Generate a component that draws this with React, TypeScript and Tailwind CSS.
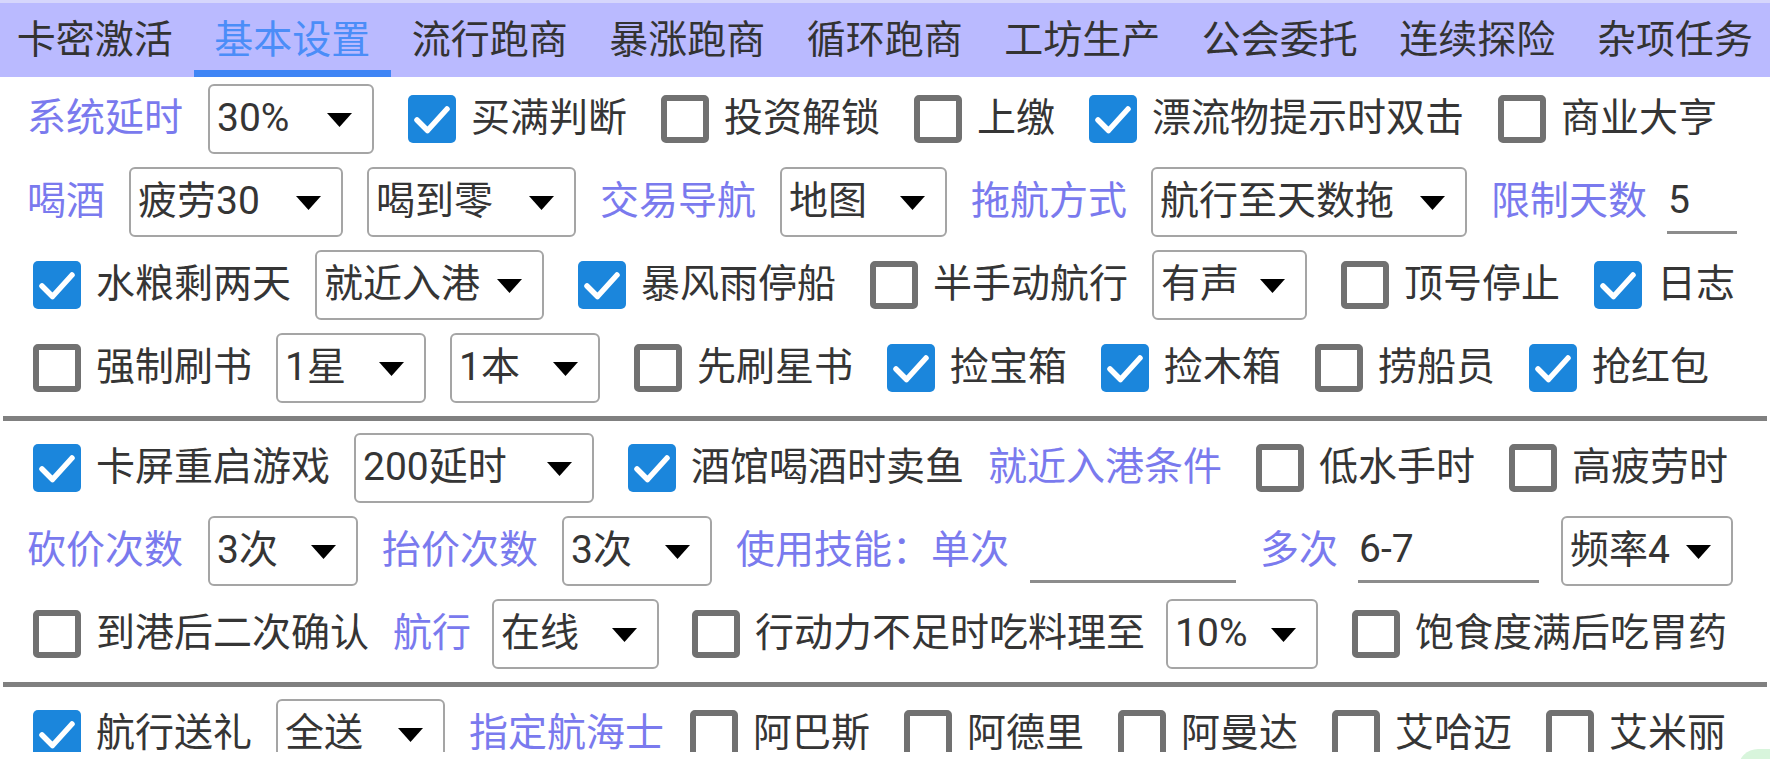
import React from 'react';

const TABS = ['卡密激活', '基本设置', '流行跑商', '暴涨跑商', '循环跑商', '工坊生产', '公会委托', '连续探险', '杂项任务'];

const Box = ({ on }: { on: boolean }) =>
    on ? (
        <span className="flex h-[48px] w-[48px] shrink-0 items-center justify-center rounded-[5px] bg-[#1b86dc]">
            <svg viewBox="0 0 48 48" className="h-[48px] w-[48px]">
                <polyline points="9,25 19.5,35.5 39,14" fill="none" stroke="#fff" strokeWidth="5.5" strokeLinecap="round" strokeLinejoin="round" />
            </svg>
        </span>
    ) : (
        <span className="h-[48px] w-[48px] shrink-0 rounded-[5px] border-[6px] border-[#717171]" />
    );

const Check = ({ on = false, text, ml = 'ml-[10px]' }: { on?: boolean; text: string; ml?: string }) => (
    <div className={`flex shrink-0 items-center gap-[15px] ${ml}`}>
        <Box on={on} />
        <span className="whitespace-nowrap">{text}</span>
    </div>
);

const Select = ({ value, className = '' }: { value: string; className?: string }) => (
    <div className={`flex h-[70px] shrink-0 items-center justify-between rounded-[6px] border-2 border-[#a5a5a5] pl-[7px] pr-[20px] ${className}`}>
        <span className="whitespace-nowrap">{value}</span>
        <svg viewBox="0 0 25 14" className="mt-[2px] h-[14px] w-[25px] shrink-0">
            <polygon points="0,0 25,0 12.5,14" fill="#000" />
        </svg>
    </div>
);

const Label = ({ text }: { text: string }) => (
    <span className="shrink-0 whitespace-nowrap text-[#7a7aee]">{text}</span>
);

const Input = ({ value = '', className = '' }: { value?: string; className?: string }) => (
    <div className={`flex h-[64px] shrink-0 items-center border-b-[3px] border-[#8c8c8c] pl-[1px] ${className}`}>
        {value}
    </div>
);

const Row = ({ children }: { children: React.ReactNode }) => (
    <div className="flex h-[83px] shrink-0 items-center gap-[24px] pl-[27px]">{children}</div>
);

const Divider = () => <div className="mx-[3px] mt-[7px] h-[5px] shrink-0 bg-[#808080]" />;

export default function App() {
    return (
        <div className="relative h-[759px] w-[1770px] overflow-hidden bg-white font-[Roboto,'Noto_Sans_CJK_SC',sans-serif] text-[39px] leading-none text-[#353535]">
            <div className="flex h-[752px] flex-col overflow-hidden">
                {/* tab bar */}
                <div className="flex h-[77px] shrink-0 border-t-[3px] border-[#d6d6fc] bg-[#babaff]">
                    <div className="ml-[-4px] flex">
                        {TABS.map((t, i) => (
                            <div key={t} className="flex flex-col px-[20.75px]">
                                <div className={`flex flex-1 items-center whitespace-nowrap pt-[8px] ${i === 1 ? 'text-[#4b8df8]' : 'text-[#333]'}`}>
                                    {t}
                                </div>
                                <div className={`-mx-[20.75px] h-[7px] ${i === 1 ? 'bg-[#3f85f5]' : ''}`} />
                            </div>
                        ))}
                    </div>
                </div>

                {/* section 1 */}
                <Row>
                    <Label text="系统延时" />
                    <Select value="30%" className="ml-[1px] w-[166px]" />
                    <Check on text="买满判断" />
                    <Check text="投资解锁" />
                    <Check text="上缴" />
                    <Check on text="漂流物提示时双击" />
                    <Check text="商业大亨" />
                </Row>
                <Row>
                    <Label text="喝酒" />
                    <Select value="疲劳30" className="w-[214px]" />
                    <Select value="喝到零" className="w-[209px]" />
                    <Label text="交易导航" />
                    <Select value="地图" className="w-[167px]" />
                    <Label text="拖航方式" />
                    <Select value="航行至天数拖" className="w-[316px]" />
                    <Label text="限制天数" />
                    <Input value="5" className="ml-[-4px] w-[70px]" />
                </Row>
                <Row>
                    <Check on ml="ml-[6px]" text="水粮剩两天" />
                    <Select value="就近入港" className="w-[229px]" />
                    <Check on text="暴风雨停船" />
                    <Check text="半手动航行" />
                    <Select value="有声" className="w-[155px]" />
                    <Check text="顶号停止" />
                    <Check on text="日志" />
                </Row>
                <Row>
                    <Check ml="ml-[6px]" text="强制刷书" />
                    <Select value="1星" className="w-[150px]" />
                    <Select value="1本" className="w-[150px]" />
                    <Check text="先刷星书" />
                    <Check on text="捡宝箱" />
                    <Check on text="捡木箱" />
                    <Check text="捞船员" />
                    <Check on text="抢红包" />
                </Row>

                <Divider />

                {/* section 2 */}
                <div className="mt-[5px] flex flex-col">
                    <Row>
                        <Check on ml="ml-[6px]" text="卡屏重启游戏" />
                        <Select value="200延时" className="w-[240px]" />
                        <Check on text="酒馆喝酒时卖鱼" />
                        <Label text="就近入港条件" />
                        <Check text="低水手时" />
                        <Check text="高疲劳时" />
                    </Row>
                    <Row>
                        <Label text="砍价次数" />
                        <Select value="3次" className="ml-[1px] w-[150px]" />
                        <Label text="抬价次数" />
                        <Select value="3次" className="w-[150px]" />
                        <Label text="使用技能：单次" />
                        <Input className="ml-[-3px] w-[206px]" />
                        <Label text="多次" />
                        <Input value="6-7" className="ml-[-4px] w-[181px]" />
                        <Select value="频率4" className="ml-[-2px] w-[172px]" />
                    </Row>
                    <Row>
                        <Check ml="ml-[6px]" text="到港后二次确认" />
                        <Label text="航行" />
                        <Select value="在线" className="ml-[-3px] w-[167px]" />
                        <Check ml="ml-[9px]" text="行动力不足时吃料理至" />
                        <Select value="10%" className="ml-[-3px] w-[152px]" />
                        <Check text="饱食度满后吃胃药" />
                    </Row>
                </div>

                <Divider />

                {/* section 3 */}
                <div className="mt-[5px] flex flex-col">
                    <Row>
                        <Check on ml="ml-[6px]" text="航行送礼" />
                        <Select value="全送" className="w-[169px]" />
                        <Label text="指定航海士" />
                        <Check ml="ml-[2px]" text="阿巴斯" />
                        <Check text="阿德里" />
                        <Check text="阿曼达" />
                        <Check text="艾哈迈" />
                        <Check text="艾米丽" />
                    </Row>
                </div>
            </div>

            {/* floating button edge peeking in at the corner */}
            <div className="absolute left-[1738px] top-[749px] h-[40px] w-[60px] rounded-full bg-[#d8f5dc]" />
        </div>
    );
}
